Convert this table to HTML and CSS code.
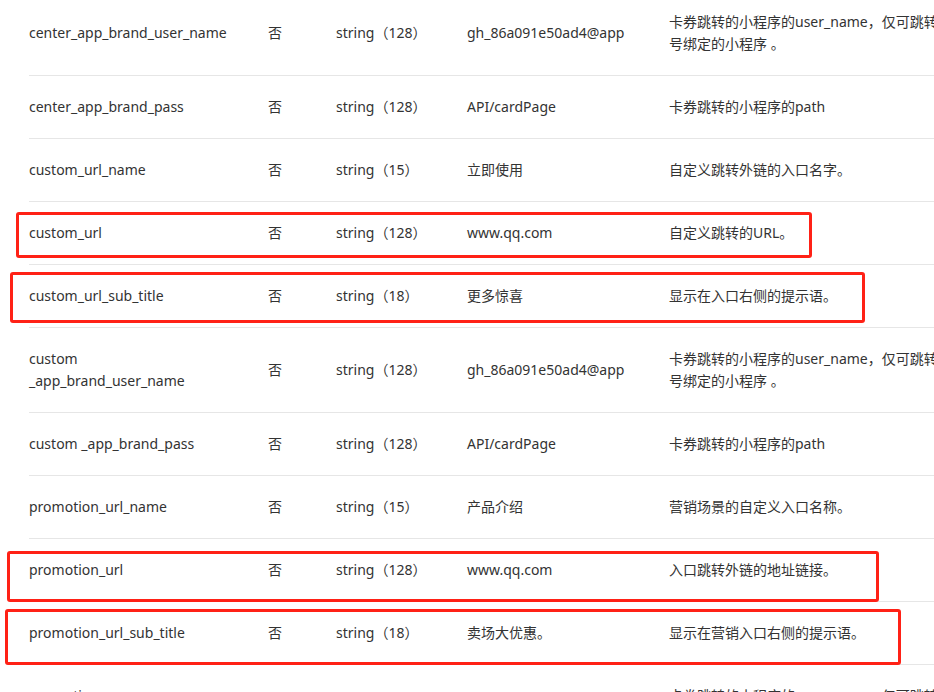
FILE: index.html
```html
<!DOCTYPE html>
<html lang="zh-CN">
<head>
<meta charset="UTF-8">
<meta name="viewport" content="width=device-width, initial-scale=1.0">
<title>参数说明</title>
<link rel="stylesheet" href="styles.css">
</head>
<body>
<div class="page">
    <table class="params">
        <colgroup>
            <col class="col-name">
            <col class="col-must">
            <col class="col-type">
            <col class="col-example">
            <col class="col-desc">
        </colgroup>
        <tr>
            <td>center_app_brand_user_name</td>
            <td>否</td>
            <td>string（128）</td>
            <td>gh_86a091e50ad4@app</td>
            <td>卡券跳转的小程序的user_name，仅可跳转该公众号绑定的小程序 。</td>
        </tr>
        <tr>
            <td>center_app_brand_pass</td>
            <td>否</td>
            <td>string（128）</td>
            <td>API/cardPage</td>
            <td>卡券跳转的小程序的path</td>
        </tr>
        <tr>
            <td>custom_url_name</td>
            <td>否</td>
            <td>string（15）</td>
            <td>立即使用</td>
            <td>自定义跳转外链的入口名字。</td>
        </tr>
        <tr>
            <td>custom_url</td>
            <td>否</td>
            <td>string（128）</td>
            <td>www.qq.com</td>
            <td>自定义跳转的URL。</td>
        </tr>
        <tr>
            <td>custom_url_sub_title</td>
            <td>否</td>
            <td>string（18）</td>
            <td>更多惊喜</td>
            <td>显示在入口右侧的提示语。</td>
        </tr>
        <tr>
            <td>custom _app_brand_user_name</td>
            <td>否</td>
            <td>string（128）</td>
            <td>gh_86a091e50ad4@app</td>
            <td>卡券跳转的小程序的user_name，仅可跳转该公众号绑定的小程序 。</td>
        </tr>
        <tr>
            <td>custom _app_brand_pass</td>
            <td>否</td>
            <td>string（128）</td>
            <td>API/cardPage</td>
            <td>卡券跳转的小程序的path</td>
        </tr>
        <tr>
            <td>promotion_url_name</td>
            <td>否</td>
            <td>string（15）</td>
            <td>产品介绍</td>
            <td>营销场景的自定义入口名称。</td>
        </tr>
        <tr>
            <td>promotion_url</td>
            <td>否</td>
            <td>string（128）</td>
            <td>www.qq.com</td>
            <td>入口跳转外链的地址链接。</td>
        </tr>
        <tr>
            <td>promotion_url_sub_title</td>
            <td>否</td>
            <td>string（18）</td>
            <td>卖场大优惠。</td>
            <td>显示在营销入口右侧的提示语。</td>
        </tr>
        <tr>
            <td>promotion _app_brand_user_name</td>
            <td>否</td>
            <td>string（128）</td>
            <td>gh_86a091e50ad4@app</td>
            <td>卡券跳转的小程序的user_name，仅可跳转该公众号绑定的小程序 。</td>
        </tr>
    </table>

    <!-- 标注框 -->
    <div class="mark mark-custom-url"></div>
    <div class="mark mark-custom-sub"></div>
    <div class="mark mark-promo-url"></div>
    <div class="mark mark-promo-sub"></div>
</div>
</body>
</html>
```

FILE: styles.css
```css
html, body {
    margin: 0;
    padding: 0;
    background: #fff;
    overflow: hidden;
}

body {
    font-family: "Microsoft YaHei", "Noto Sans", "Noto Sans CJK SC", sans-serif;
    font-size: 14px;
    line-height: 22px;
    color: #333;
}

.page {
    position: relative;
    height: 692px;
    overflow: hidden;
}

.params {
    border-collapse: collapse;
    table-layout: fixed;
    width: 970px;
    margin: -9px 0 0 29px;
}

.col-name { width: 239px; }
.col-must { width: 68px; }
.col-type { width: 131px; }
.col-example { width: 202px; }
.col-desc { width: 330px; }

.params tr {
    border-bottom: 1px solid #e6e6e6;
}

.params td {
    padding: 20px 36px 20px 0;
    vertical-align: middle;
    word-break: normal;
}

.params td:last-child {
    padding-right: 8px;
}

.mark {
    position: absolute;
    box-sizing: border-box;
    border: 3px solid #ff2116;
    border-radius: 3px;
}

.mark-custom-url { left: 16px; top: 212px; width: 796px; height: 46px; }
.mark-custom-sub { left: 10px; top: 272px; width: 855px; height: 51px; }
.mark-promo-url { left: 7px; top: 551px; width: 872px; height: 51px; }
.mark-promo-sub { left: 5px; top: 609px; width: 896px; height: 56px; }
```
